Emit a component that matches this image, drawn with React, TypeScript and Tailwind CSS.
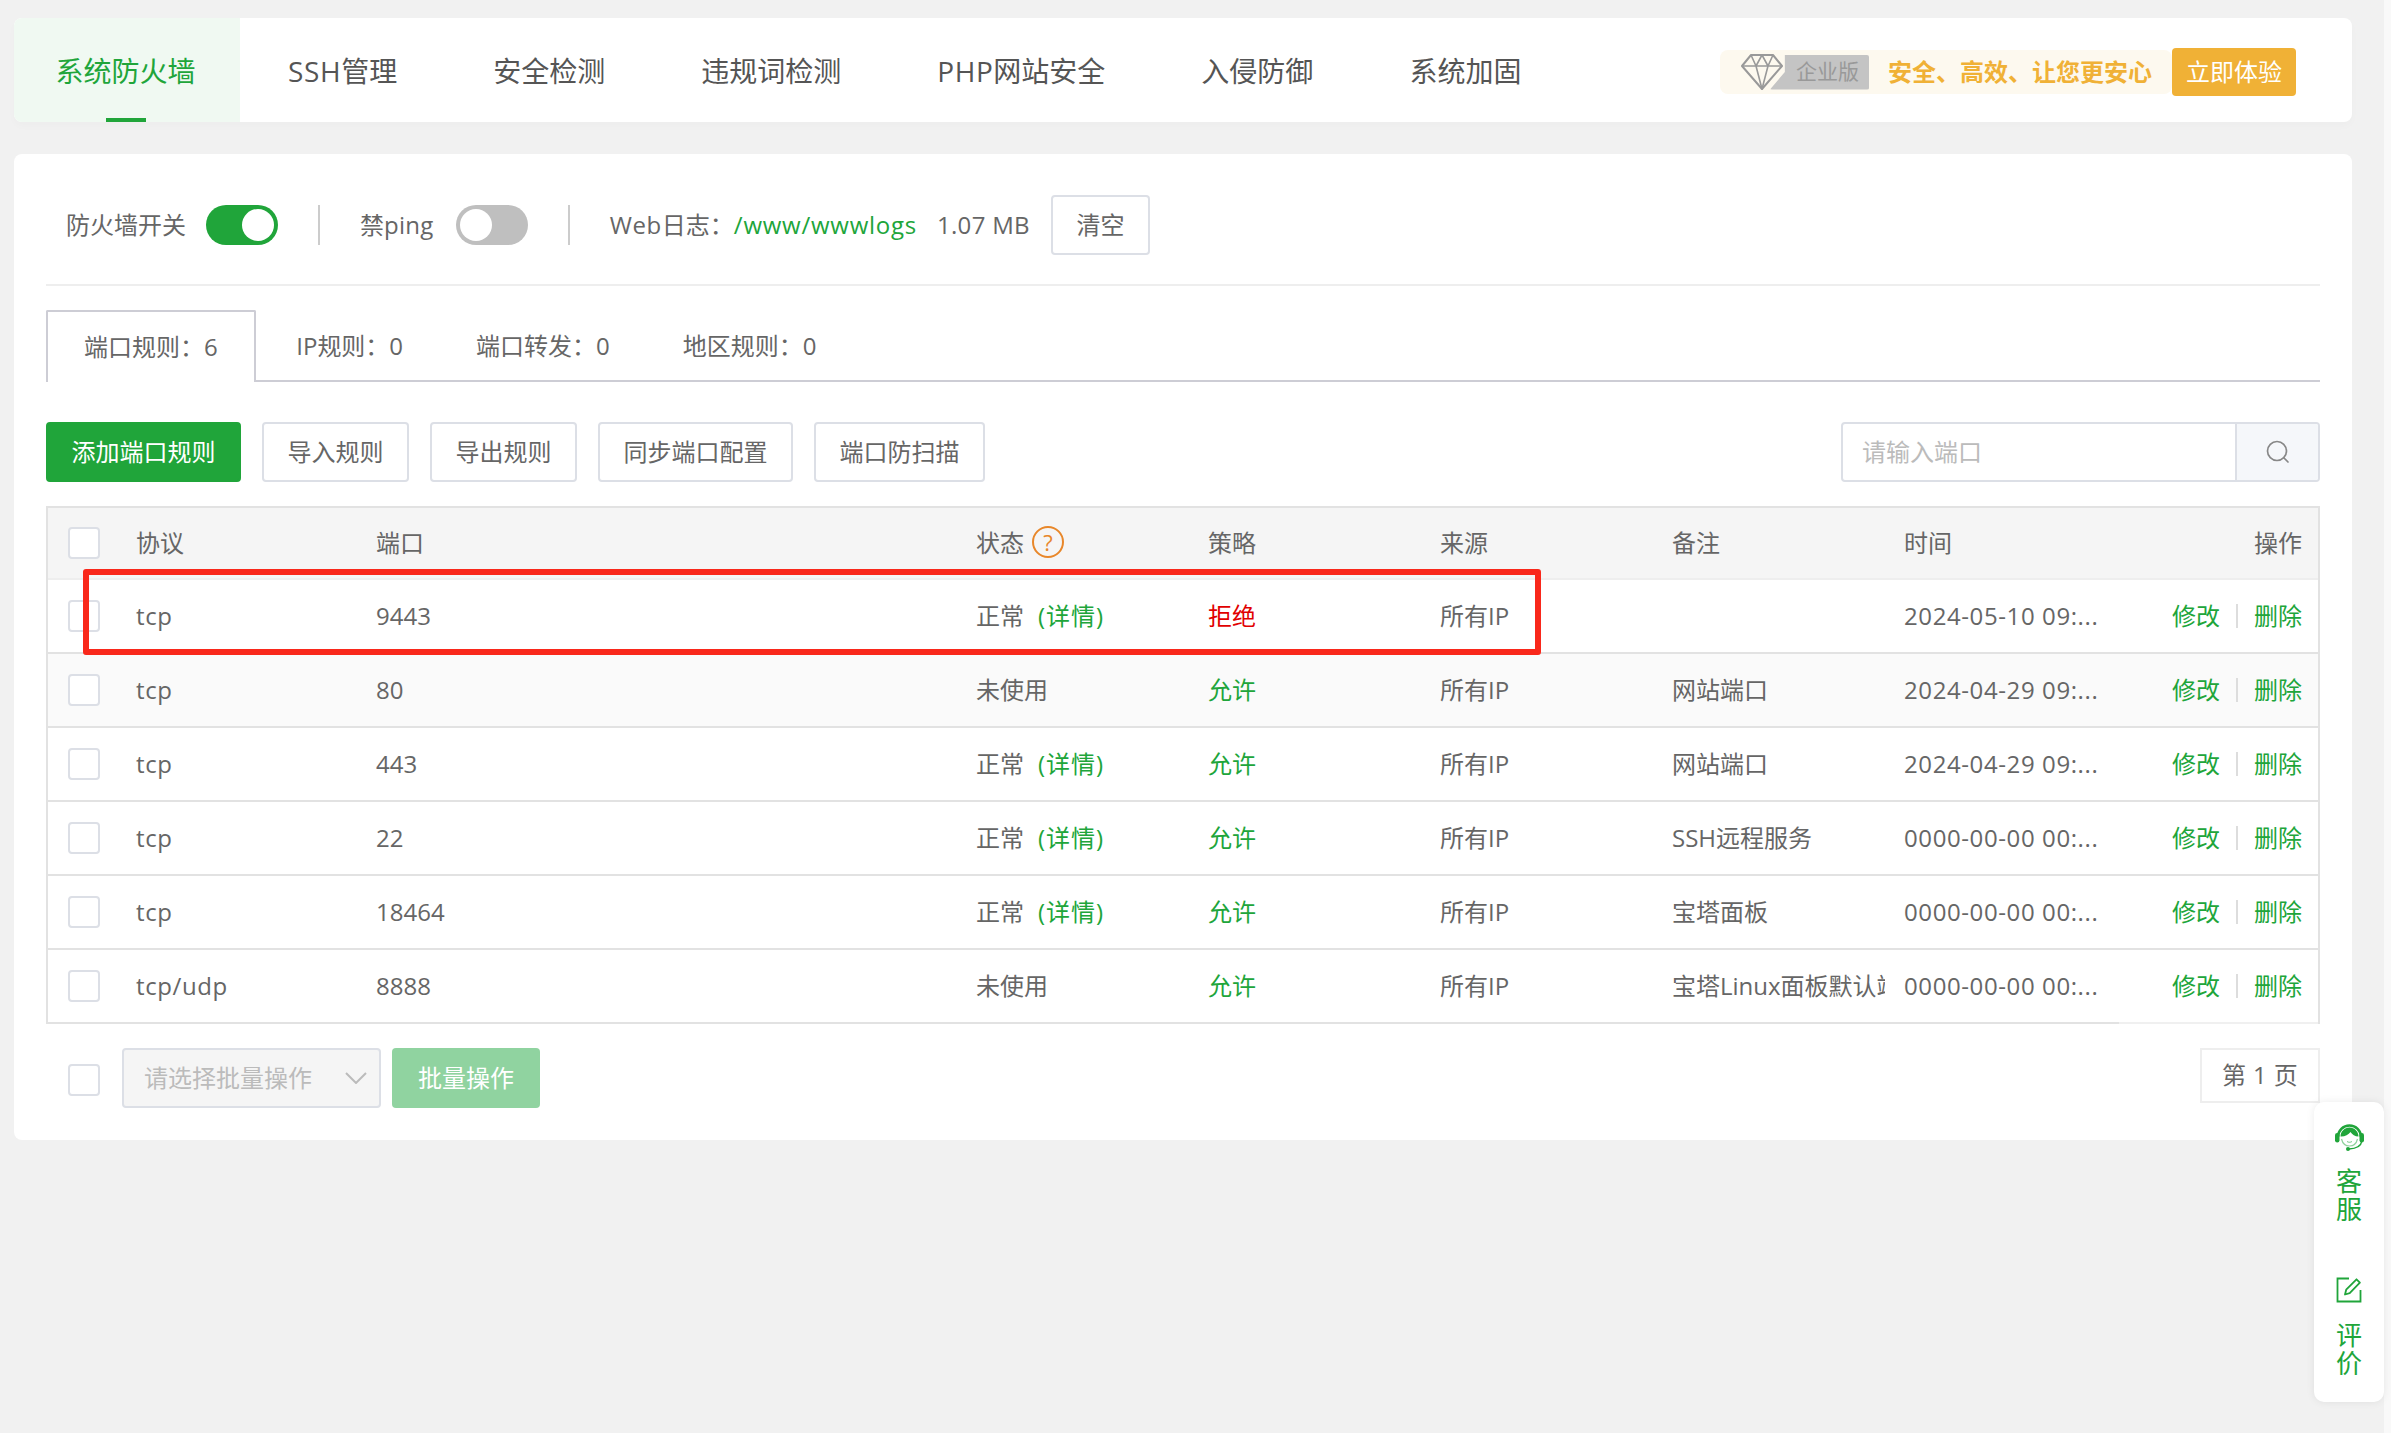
import React from "react";

const font = "font-['Open_Sans','Noto_Sans_CJK_SC',sans-serif]";
const cols = "grid grid-cols-[88px_240px_600px_232px_232px_232px_232px_232px_1fr] items-center";

const Check = () => <span className="block h-[32px] w-[32px] rounded-[4px] border-2 border-[#dcdfe6] bg-white" />;

const Toggle = ({ on }: { on: boolean }) => (
  <span className={`flex h-[40px] w-[72px] items-center rounded-full p-[4px] ${on ? "justify-end bg-[#20a53a]" : "justify-start bg-[#bfbfbf]"}`}>
    <span className="block h-[32px] w-[32px] rounded-full bg-white" />
  </span>
);

const Btn = ({ children, primary }: { children: React.ReactNode; primary?: boolean }) => (
  <button className={`h-[60px] rounded-[4px] border-2 px-[23.5px] text-[24px] leading-none ${primary ? "border-[#20a53a] bg-[#20a53a] text-white" : "border-[#dcdfe6] bg-white text-[#666]"}`}>
    {children}
  </button>
);

const rows = [
  { p: "tcp", port: "9443", ok: true, reject: true, note: "", time: "2024-05-10 09:..." },
  { p: "tcp", port: "80", ok: false, note: "网站端口", time: "2024-04-29 09:...", shade: true },
  { p: "tcp", port: "443", ok: true, note: "网站端口", time: "2024-04-29 09:..." },
  { p: "tcp", port: "22", ok: true, note: "SSH远程服务", time: "0000-00-00 00:..." },
  { p: "tcp", port: "18464", ok: true, note: "宝塔面板", time: "0000-00-00 00:..." },
  { p: "tcp/udp", port: "8888", ok: false, note: "宝塔Linux面板默认端口", time: "0000-00-00 00:...", last: true },
];

const Diamond = () => (
  <svg width="42" height="36" viewBox="0 0 42 36" fill="none" stroke="#999" strokeWidth="2" strokeLinejoin="round">
    <path d="M10 1h22l9 11-20 23L1 12z" />
    <path d="M1 12h40M10 1l5 11 6 23 6-23 5-11M15 12l6-11 6 11" strokeWidth="1.6" />
  </svg>
);

const Headset = () => (
  <svg width="29" height="27" viewBox="0 0 29 27">
    <path d="M3 13A11.500 11.500 0 0 1 26 13" fill="none" stroke="#20a53a" strokeWidth="2.600" />
    <rect x="0" y="9" width="4.500" height="9.500" rx="2.200" fill="#20a53a" />
    <rect x="24.500" y="9" width="4.500" height="9.500" rx="2.200" fill="#20a53a" />
    <path d="M5.500 12.500C5.500 7.500 9.500 3.500 14.500 3.500S23.500 7.500 23.500 12.500C20 12.500 17.200 10.500 15.500 8C13.500 10.800 9.500 12.800 5.500 12.500z" fill="#20a53a" />
    <path d="M6.500 15C7.500 19 10.500 22 14.500 22S21.500 19 22.500 15" fill="none" stroke="#20a53a" strokeWidth="1.200" opacity="0.5" />
    <path d="M12 17.500c1.500 1 3.500 1 5 0" fill="none" stroke="#20a53a" strokeWidth="1" opacity="0.6" />
    <path d="M26.500 18C26 22 21 24.500 14 25" fill="none" stroke="#20a53a" strokeWidth="1.500" />
    <circle cx="13" cy="25" r="2" fill="#20a53a" />
  </svg>
);

const Edit = () => (
  <svg width="26" height="26" viewBox="0 0 26 26" fill="none" stroke="#20a53a" strokeWidth="1.8">
    <path d="M13 1.500H1.500v23h23V13" />
    <path d="M9 17.500l1.200-4.800L20.500 2.300l3.400 3.400-10.200 10.500z" strokeLinejoin="round" />
  </svg>
);

const Cell = ({ children, className = "" }: { children?: React.ReactNode; className?: string }) => (
  <div className={`min-w-0 whitespace-nowrap ${className}`}>{children}</div>
);

export default function App() {
  return (
    <div className={`relative h-[1451px] w-[2391px] overflow-hidden bg-white text-[24px] text-[#666] ${font}`}>
      <div className="flex h-[1433px]">
        <div className="h-full w-[2384px] bg-[#f1f1f1] pl-[14px] pt-[18px]">
          {/* top tabs */}
          <div className="flex h-[104px] w-[2338px] items-center overflow-hidden rounded-[8px] bg-white pr-[56px] shadow-[0_4px_8px_rgba(0,0,0,0.02)]">
            <div className="relative flex h-full w-[226px] items-center justify-center bg-[#f0f9f2] pt-[2px] pr-[3px] text-[28px] text-[#20a53a]">
              系统防火墙
              <span className="absolute bottom-0 left-[92px] h-[4px] w-[40px] bg-[#20a53a]" />
            </div>
            {[
              ["SSH", "管理"],
              ["", "安全检测"],
              ["", "违规词检测"],
              ["PHP", "网站安全"],
              ["", "入侵防御"],
              ["", "系统加固"],
            ].map(([a, b]) => (
              <div key={b + a} className="px-[48px] pt-[2px] text-[28px] text-[#555]">
                {a ? <span className="tracking-[0.6px]">{a}</span> : null}
                {b}
              </div>
            ))}
            <div className="ml-auto mt-[4px] flex items-center">
              <div className="flex h-[44px] w-[452px] items-center rounded-[8px] bg-[#fdf9ef] pl-[21px]">
                <Diamond />
                <span className="-ml-[13px] flex h-[35px] w-[99px] items-center justify-end rounded-[2px] bg-[#c4c4c4] pr-[10px] text-[21px] text-[#999] [clip-path:polygon(15%_0,100%_0,100%_100%,0_100%,15%_50%)]">企业版</span>
                <span className="ml-[19px] text-[24px] font-bold text-[#f0b136]">安全、高效、让您更安心</span>
              </div>
              <div className="flex h-[48px] w-[124px] items-center justify-center rounded-[4px] bg-[#f0b136] text-white">立即体验</div>
            </div>
          </div>

          {/* main card */}
          <div className="relative mt-[32px] h-[986px] w-[2338px] rounded-[8px] bg-white px-[32px] pt-[41px]">
            <div className="flex h-[60px] items-center">
              <span className="ml-[20px]">防火墙开关</span>
              <span className="ml-[20px]"><Toggle on /></span>
              <span className="ml-[40px] h-[40px] w-[2px] bg-[#cccccc]" />
              <span className="ml-[40px]">禁<span className="tracking-[0.3px]">ping</span></span>
              <span className="ml-[22px]"><Toggle on={false} /></span>
              <span className="ml-[40px] h-[40px] w-[2px] bg-[#cccccc]" />
              <span className="ml-[40px]"><span className="tracking-[0.6px]">Web</span>日志：</span>
              <span className="tracking-[0.75px] text-[#20a53a]">/www/wwwlogs</span>
              <span className="ml-[20px] tracking-[0.3px]">1.07 MB</span>
              <button className="ml-[21px] h-[60px] w-[99px] rounded-[4px] border-2 border-[#dcdfe6] bg-white text-[#666]">清空</button>
            </div>
            <div className="mt-[29px] h-[2px] bg-[#eeeeee]" />

            <div className="mt-[24px] flex h-[72px] items-end border-b-2 border-[#cdcdd5]">
              <div className="-mb-[2px] mr-[4px] flex h-[72px] items-center rounded-t-[2px] border-2 border-b-0 border-[#cdcdd5] bg-white px-[36px]">端口规则：6</div>
              {["IP规则：0", "端口转发：0", "地区规则：0"].map((t) => (
                <div key={t} className="flex h-[70px] items-center px-[36.500px] pt-[2px]">{t}</div>
              ))}
            </div>

            <div className="mt-[40px] flex items-center gap-[21px]">
              <Btn primary>添加端口规则</Btn>
              <Btn>导入规则</Btn>
              <Btn>导出规则</Btn>
              <Btn>同步端口配置</Btn>
              <Btn>端口防扫描</Btn>
              <div className="ml-auto flex h-[60px] w-[479px] overflow-hidden rounded-[4px] border-2 border-[#dcdfe6]">
                <div className="flex-1 pl-[19px] text-[24px] leading-[56px] text-[#bbbbbb]">请输入端口</div>
                <div className="flex w-[83px] items-center justify-center border-l-2 border-[#dcdfe6] bg-[#f5f7fa]">
                  <svg width="24" height="24" viewBox="0 0 24 24" fill="none" stroke="#888" strokeWidth="1.700">
                    <circle cx="11" cy="11" r="9.500" />
                    <path d="M18 18l4 4" strokeLinecap="round" />
                  </svg>
                </div>
              </div>
            </div>

            {/* table */}
            <div className="mt-[24px] border-x-2 border-t-2 border-[#e2e2e2]">
              <div className={`${cols} h-[72px] border-b-2 border-[#eeeeee] bg-[#f5f5f5]`}>
                <Cell className="pl-[20px]"><Check /></Cell>
                <Cell>协议</Cell>
                <Cell>端口</Cell>
                <Cell className="flex items-center gap-[8px]">
                  状态
                  <span className="-mt-[3px] flex h-[32px] w-[32px] items-center justify-center rounded-full border-2 border-[#e8872a] text-[22px] leading-none text-[#e8872a]">?</span>
                </Cell>
                <Cell>策略</Cell>
                <Cell>来源</Cell>
                <Cell>备注</Cell>
                <Cell>时间</Cell>
                <Cell className="pr-[16px] text-right">操作</Cell>
              </div>
              {rows.map((r, i) => (
                <div key={i} className={`${cols} relative h-[74px] border-b-2 border-[#e2e2e2] ${r.shade ? "bg-[#fafafa]" : "bg-white"}`}>
                  <Cell className="pl-[20px]"><Check /></Cell>
                  <Cell className="tracking-[0.6px]">{r.p}</Cell>
                  <Cell>{r.port}</Cell>
                  <Cell>
                    {r.ok ? (
                      <>正常<span className="ml-[14px] tracking-[1px] text-[#20a53a]">(详情)</span></>
                    ) : "未使用"}
                  </Cell>
                  <Cell className={r.reject ? "text-[#e10000]" : "text-[#20a53a]"}>{r.reject ? "拒绝" : "允许"}</Cell>
                  <Cell>所有IP</Cell>
                  <Cell className="w-[213px] overflow-hidden">{r.note}</Cell>
                  <Cell className="tracking-[0.6px]">{r.time}</Cell>
                  <Cell className="flex items-center justify-end pr-[16px] text-[#20a53a]">
                    修改
                    <span className="mx-[16px] h-[24px] w-[2px] bg-[#dddddd]" />
                    删除
                  </Cell>
                  {r.last ? <span className="absolute -bottom-[2px] right-0 h-[2px] w-[199px] bg-[#f0f0f0]" /> : null}
                </div>
              ))}
            </div>

            {/* bottom bar */}
            <div className="mt-[24px] flex h-[60px] items-start">
              <span className="ml-[22px] mt-[16px]"><Check /></span>
              <div className="ml-[22px] flex h-[60px] w-[259px] items-center justify-between rounded-[4px] border-2 border-[#dcdfe6] bg-[#f5f5f5] pl-[20px] pr-[12px] text-[#bbbbbb]">
                请选择批量操作
                <svg width="22" height="12" viewBox="0 0 22 12" fill="none" stroke="#bbb" strokeWidth="2"><path d="M1 1l10 10L21 1" /></svg>
              </div>
              <button className="ml-[11px] h-[60px] w-[148px] rounded-[4px] bg-[#90d3a0] text-white">批量操作</button>
              <div className="ml-auto flex h-[55px] w-[120px] items-center justify-center whitespace-pre border-2 border-[#eeeeee] pb-[2px] tracking-[0.4px]">第 1 页</div>
            </div>

            {/* highlight marking on the picture */}
            <div className="absolute left-[69px] top-[415px] h-[86px] w-[1458px] rounded-[3px] border-[6px] border-[#f9281b]" />
          </div>
        </div>
        <div className="h-full w-[7px] bg-[#f9f9f9]" />
      </div>

      {/* floating service panel */}
      <div className="absolute left-[2314px] top-[1102px] flex h-[300px] w-[70px] flex-col items-center rounded-[10px] bg-white pt-[22px] text-[26px] leading-[28px] text-[#20a53a] shadow-[0_0_8px_rgba(0,0,0,0.08)]">
        <Headset />
        <span className="mt-[16px] w-[26px] text-center">客服</span>
        <span className="mt-[54px]"><Edit /></span>
        <span className="mt-[18px] w-[26px] text-center">评价</span>
      </div>
    </div>
  );
}
